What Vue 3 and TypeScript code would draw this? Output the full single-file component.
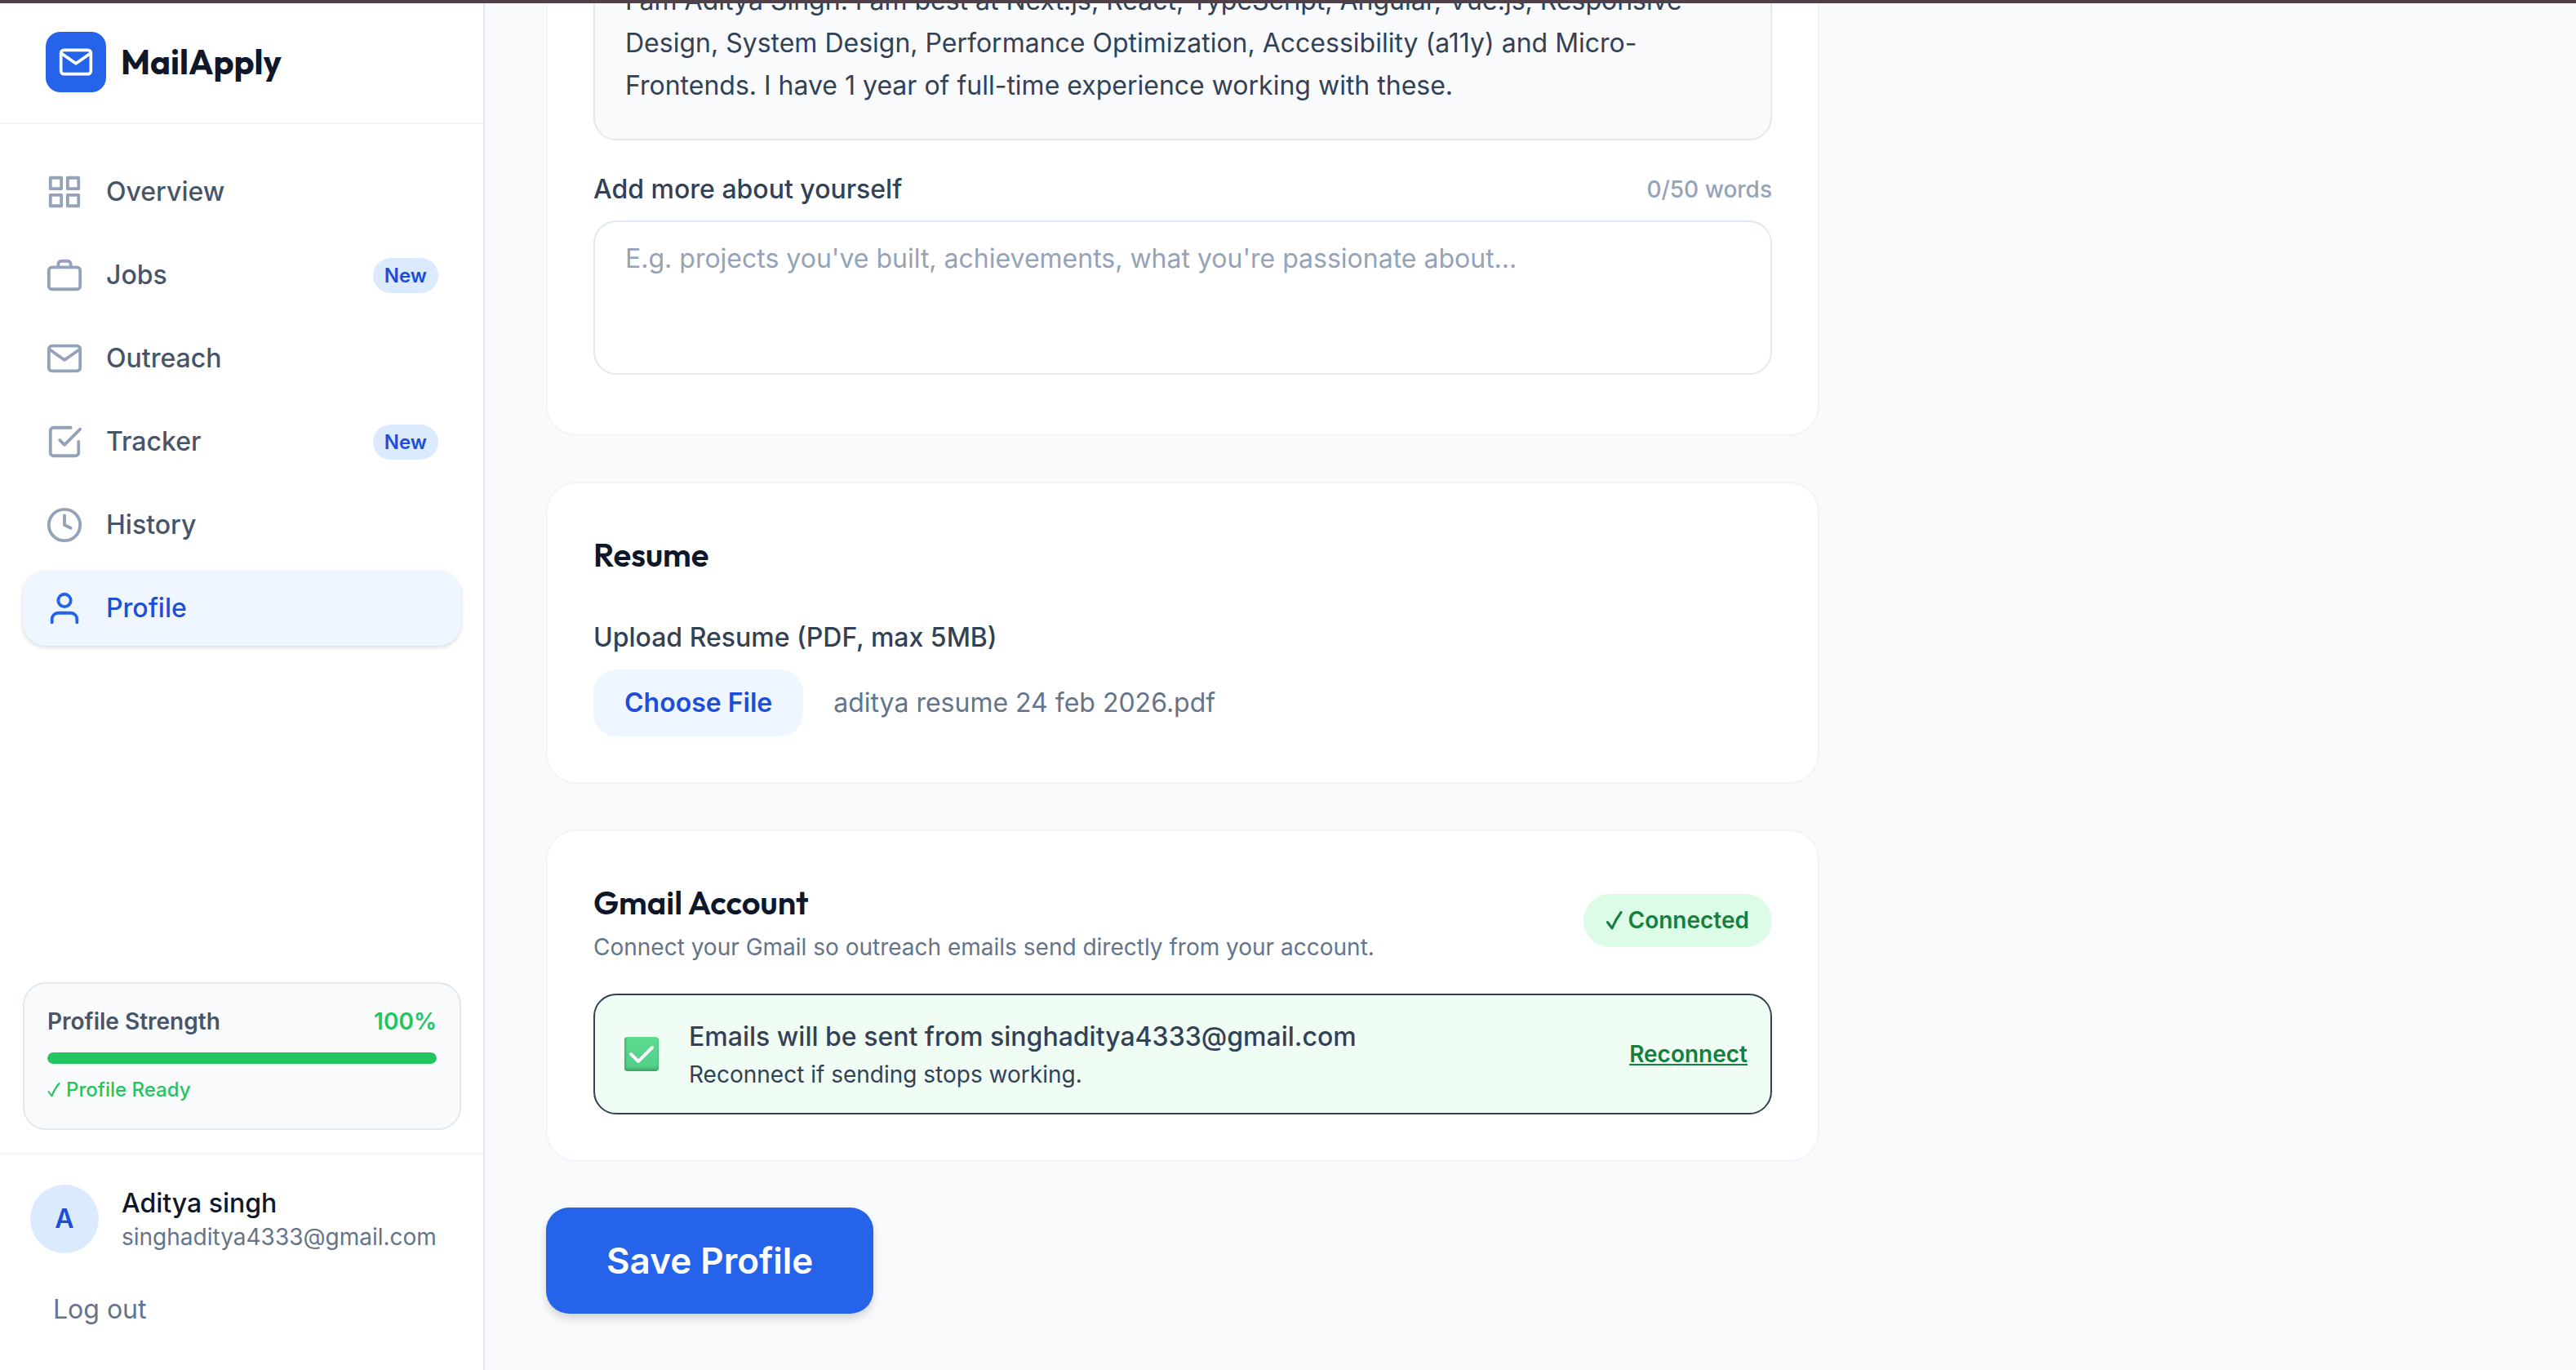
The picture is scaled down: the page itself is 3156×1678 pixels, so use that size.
<script setup lang="ts">
import { ref, computed } from 'vue'

type IconName = 'grid' | 'briefcase' | 'mail' | 'check' | 'clock' | 'user'

interface NavItem {
  label: string
  icon: IconName
  badge?: string
  active?: boolean
}

const navItems: NavItem[] = [
  { label: 'Overview', icon: 'grid' },
  { label: 'Jobs', icon: 'briefcase', badge: 'New' },
  { label: 'Outreach', icon: 'mail' },
  { label: 'Tracker', icon: 'check', badge: 'New' },
  { label: 'History', icon: 'clock' },
  { label: 'Profile', icon: 'user', active: true },
]

const strength = ref(100)
const email = 'singhaditya4333@gmail.com'
const bio =
  'I am Aditya Singh. I am best at Next.js, React, TypeScript, Angular, Vue.js, Responsive Design, System Design, Performance Optimization, Accessibility (a11y) and Micro-Frontends. I have 1 year of full-time experience working with these.'
const about = ref('')
const wordCount = computed(() => about.value.split(/\s+/).filter(Boolean).length)
</script>

<template>
  <div class="app">
    <div class="edge"></div>
    <div class="shell">
      <aside class="sidebar">
        <header class="brand">
          <span class="logo">
            <svg viewBox="0 0 24 24" class="logo-icon" aria-hidden="true">
              <rect x="2" y="4" width="20" height="16" rx="2" />
              <polyline points="22 6 12 13 2 6" />
            </svg>
          </span>
          <span class="brand-name">MailApply</span>
        </header>

        <nav class="nav">
          <a
            v-for="item in navItems"
            :key="item.label"
            href="#"
            class="nav-item"
            :class="{ active: item.active }"
          >
            <svg viewBox="0 0 24 24" class="nav-icon" aria-hidden="true">
              <template v-if="item.icon === 'grid'">
                <rect x="3" y="3" width="7" height="7" />
                <rect x="14" y="3" width="7" height="7" />
                <rect x="14" y="14" width="7" height="7" />
                <rect x="3" y="14" width="7" height="7" />
              </template>
              <template v-else-if="item.icon === 'briefcase'">
                <rect x="2" y="7" width="20" height="14" rx="2" />
                <path d="M16 7V5a2 2 0 0 0-2-2h-4a2 2 0 0 0-2 2v2" />
              </template>
              <template v-else-if="item.icon === 'mail'">
                <rect x="2" y="4" width="20" height="16" rx="2" />
                <polyline points="22 6 12 13 2 6" />
              </template>
              <template v-else-if="item.icon === 'check'">
                <polyline points="9 11 12 14 22 4" />
                <path d="M21 12v7a2 2 0 0 1-2 2H5a2 2 0 0 1-2-2V5a2 2 0 0 1 2-2h11" />
              </template>
              <template v-else-if="item.icon === 'clock'">
                <circle cx="12" cy="12" r="10" />
                <polyline points="12 6 12 12 16 14" />
              </template>
              <template v-else>
                <path d="M20 21v-2a4 4 0 0 0-4-4H8a4 4 0 0 0-4 4v2" />
                <circle cx="12" cy="7" r="4" />
              </template>
            </svg>
            <span class="nav-label">{{ item.label }}</span>
            <span v-if="item.badge" class="badge">{{ item.badge }}</span>
          </a>
        </nav>

        <section class="strength">
          <div class="strength-row">
            <span class="strength-title">Profile Strength</span>
            <span class="strength-value">{{ strength }}%</span>
          </div>
          <div class="track">
            <div class="fill" :style="{ width: strength + '%' }"></div>
          </div>
          <p class="ready">
            <svg viewBox="0 0 16 18" class="ready-check" aria-hidden="true">
              <path d="M1.500 11L5.500 16.500Q8.500 8 14.500 1" />
            </svg>
            <span>Profile Ready</span>
          </p>
        </section>

        <footer class="account">
          <div class="user">
            <span class="avatar">A</span>
            <div class="user-text">
              <span class="user-name">Aditya singh</span>
              <span class="user-email">{{ email }}</span>
            </div>
          </div>
          <button type="button" class="logout">Log out</button>
        </footer>
      </aside>

      <main class="main">
        <section class="card about-card">
          <p class="bio">{{ bio }}</p>
          <div class="field-head">
            <label for="about" class="label">Add more about yourself</label>
            <span class="count">{{ wordCount }}/50 words</span>
          </div>
          <textarea
            id="about"
            v-model="about"
            class="about"
            placeholder="E.g. projects you've built, achievements, what you're passionate about..."
          ></textarea>
        </section>

        <section class="card resume-card">
          <h2 class="title">Resume</h2>
          <span id="resume-label" class="label">Upload Resume (PDF, max 5MB)</span>
          <div class="file-row">
            <button type="button" class="choose" aria-describedby="resume-label">Choose File</button>
            <span class="file-name">aditya resume 24 feb 2026.pdf</span>
          </div>
        </section>

        <section class="card gmail-card">
          <div class="gmail-head">
            <div>
              <h2 class="title">Gmail Account</h2>
              <p class="subtitle">Connect your Gmail so outreach emails send directly from your account.</p>
            </div>
            <span class="pill">
              <svg viewBox="0 0 20 23" class="pill-check" aria-hidden="true">
                <path d="M1.500 13.500L7 21Q11.500 10 18 1.500" />
              </svg>
              <span>Connected</span>
            </span>
          </div>
          <div class="status">
            <svg viewBox="0 0 42 42" class="tick" aria-hidden="true">
              <defs>
                <linearGradient id="tick-fill" x1="0" y1="0" x2="0" y2="1">
                  <stop offset="0" stop-color="#5bdc90" />
                  <stop offset="0.86" stop-color="#53cf88" />
                  <stop offset="1" stop-color="#3f9f69" />
                </linearGradient>
                <linearGradient id="tick-edge" x1="0" y1="0" x2="1" y2="0">
                  <stop offset="0" stop-color="#2f8f5a" stop-opacity="0.6" />
                  <stop offset="0.08" stop-color="#2f8f5a" stop-opacity="0" />
                  <stop offset="0.95" stop-color="#2f8f5a" stop-opacity="0" />
                  <stop offset="1" stop-color="#2f8f5a" stop-opacity="0.3" />
                </linearGradient>
              </defs>
              <rect width="42" height="42" rx="4" fill="url(#tick-fill)" />
              <rect width="42" height="42" rx="4" fill="url(#tick-edge)" />
              <path d="M8 21L17 30L34 13" fill="none" stroke="#fbf3fb" stroke-width="4" stroke-linecap="round" stroke-linejoin="round" />
            </svg>
            <div class="status-text">
              <p class="status-main">Emails will be sent from {{ email }}</p>
              <p class="status-sub">Reconnect if sending stops working.</p>
            </div>
            <a href="#" class="reconnect">Reconnect</a>
          </div>
        </section>

        <button type="button" class="save">Save Profile</button>
      </main>
    </div>
  </div>
</template>

<style>
body {
  margin: 0;
  background: #f8fafc;
}
</style>

<style scoped>
.app {
  display: flex;
  flex-direction: column;
  height: 100vh;
  overflow: hidden;
  background: #f8fafc;
  color: #334155;
  font-family: Inter, 'Liberation Sans', sans-serif;
  font-size: 32px;
  line-height: 46px;
}
.app * {
  box-sizing: border-box;
}
p,
h2 {
  margin: 0;
}
button {
  border: 0;
  font: inherit;
  cursor: pointer;
}
.edge {
  flex: none;
  height: 4px;
  background: #50404a;
}
.shell {
  display: flex;
  flex: 1;
  min-height: 0;
}

.sidebar {
  display: flex;
  flex-direction: column;
  flex: none;
  width: 594px;
  background: #fff;
  border-right: 2px solid #e2e8f0;
}
.brand {
  display: flex;
  align-items: center;
  gap: 18px;
  padding: 35px 56px 37px;
  border-bottom: 2px solid #f1f5f9;
}
.logo {
  display: flex;
  align-items: center;
  justify-content: center;
  width: 74px;
  height: 74px;
  border-radius: 18px;
  background: #2563eb;
}
.logo-icon,
.nav-icon,
.ready-check,
.pill-check {
  flex: none;
  fill: none;
  stroke: currentColor;
  stroke-width: 2;
  stroke-linecap: round;
  stroke-linejoin: round;
}
.logo-icon {
  width: 44px;
  height: 44px;
  color: #fff;
}
.brand-name {
  font-family: Outfit, Lato, sans-serif;
  font-size: 42px;
  font-weight: 700;
  color: #0f172a;
}
.nav {
  display: flex;
  flex-direction: column;
  flex: 1;
  gap: 10px;
  padding: 37px 27px 37px 28px;
}
.nav-item {
  display: flex;
  align-items: center;
  gap: 28px;
  padding: 23px 28px;
  border-radius: 28px;
  color: #475569;
  font-weight: 500;
  text-decoration: none;
}
.nav-icon {
  width: 46px;
  height: 46px;
  color: #94a3b8;
}
.nav-label {
  flex: 1;
}
.nav-item.active {
  background: #eff6ff;
  color: #1d4ed8;
  box-shadow: 0 2px 6px rgba(0, 0, 0, 0.1), 0 2px 4px rgba(0, 0, 0, 0.06);
}
.nav-item.active .nav-icon {
  color: #2563eb;
}
.badge {
  padding: 4px 14px;
  border-radius: 22px;
  background: #dbeafe;
  color: #1d4ed8;
  font-size: 24px;
  line-height: 35px;
  font-weight: 600;
}

.strength {
  margin: 0 27px 28px 28px;
  padding: 28px 28px 30px;
  border: 2px solid #e2e8f0;
  border-radius: 28px;
  background: #f8fafc;
}
.strength-row {
  display: flex;
  justify-content: space-between;
  font-size: 28px;
  line-height: 36px;
  font-weight: 600;
}
.strength-title {
  color: #475569;
}
.strength-value {
  color: #22c55e;
}
.track {
  height: 14px;
  margin-top: 20px;
  border-radius: 7px;
  background: #e2e8f0;
  overflow: hidden;
}
.fill {
  height: 100%;
  border-radius: 7px;
  background: #22c55e;
}
.ready {
  display: flex;
  align-items: center;
  gap: 7px;
  margin-top: 14px;
  color: #22c55e;
  font-size: 24px;
  line-height: 35px;
  font-weight: 500;
}
.ready-check {
  width: 16px;
  height: 18px;
}

.account {
  padding: 37px 28px 33px;
  border-top: 2px solid #f1f5f9;
}
.user {
  display: flex;
  align-items: center;
  gap: 28px;
  padding: 0 9px;
}
.avatar {
  display: flex;
  align-items: center;
  justify-content: center;
  flex: none;
  width: 84px;
  height: 84px;
  border-radius: 50%;
  background: #dbeafe;
  color: #1d4ed8;
  font-weight: 600;
}
.user-text {
  display: flex;
  flex-direction: column;
}
.user-name {
  color: #0f172a;
  font-weight: 500;
  line-height: 44px;
}
.user-email {
  color: #64748b;
  font-size: 28px;
  line-height: 38px;
}
.logout {
  display: block;
  margin-top: 28px;
  padding: 18px 37px;
  background: none;
  color: #64748b;
}

.main {
  display: flex;
  flex-direction: column;
  flex: 1;
  align-items: flex-start;
  justify-content: flex-end;
  gap: 56px;
  min-width: 0;
  padding: 0 75px 69px;
  overflow: hidden;
}
.card {
  flex: none;
  width: 100%;
  max-width: 1560px;
  padding: 56px;
  border: 2px solid #f1f5f9;
  border-radius: 37px;
  background: #fff;
}
.about-card {
  padding-bottom: 73px;
}
.bio {
  padding: 37px 37px 39px;
  border: 2px solid #e2e8f0;
  border-radius: 28px;
  background: #f8fafc;
  line-height: 52px;
}
.field-head {
  display: flex;
  align-items: center;
  justify-content: space-between;
  margin: 37px 0 15px;
}
.label {
  display: block;
  color: #334155;
  font-weight: 500;
}
.count {
  color: #94a3b8;
  font-size: 28px;
  font-weight: 500;
}
.about {
  display: block;
  width: 100%;
  height: 189px;
  padding: 22px 37px;
  border: 2px solid #e2e8f0;
  border-radius: 28px;
  background: #fff;
  color: #334155;
  font: inherit;
  resize: none;
  outline: none;
}
.about::placeholder {
  color: #94a3b8;
  opacity: 1;
}
.title {
  color: #0f172a;
  font-family: Outfit, Lato, sans-serif;
  font-size: 40px;
  font-weight: 600;
  line-height: 62px;
}
.resume-card .title {
  margin-bottom: 48px;
}
.file-row {
  display: flex;
  align-items: center;
  gap: 37px;
  margin-top: 16px;
}
.choose {
  padding: 18px 38px;
  border-radius: 28px;
  background: #eff6ff;
  color: #1d4ed8;
  font-weight: 600;
}
.file-name {
  color: #64748b;
}
.gmail-head {
  display: flex;
  align-items: center;
  justify-content: space-between;
  margin-bottom: 37px;
}
.subtitle {
  margin-top: 4px;
  color: #64748b;
  font-size: 28px;
  line-height: 40px;
}
.pill {
  display: flex;
  align-items: center;
  gap: 7px;
  padding: 14px 28px;
  border-radius: 33px;
  background: #dcfce7;
  color: #15803d;
  font-size: 28px;
  font-weight: 600;
  line-height: 37px;
}
.pill-check {
  width: 20px;
  height: 23px;
  stroke-width: 3;
}
.status {
  display: flex;
  align-items: center;
  gap: 37px;
  padding: 28px 28px 28px 36px;
  border: 2px solid #334155;
  border-radius: 28px;
  background: #f0fdf4;
}
.tick {
  flex: none;
  width: 42px;
  height: 42px;
}
.status-text {
  flex: 1;
}
.status-main {
  font-weight: 500;
}
.status-sub {
  margin-top: 4px;
  font-size: 28px;
  line-height: 38px;
}
.reconnect {
  color: #15803d;
  font-size: 28px;
  font-weight: 600;
}
.save {
  flex: none;
  padding: 37px 74px;
  border-radius: 28px;
  background: #2563eb;
  color: #fff;
  font-size: 44px;
  font-weight: 600;
  line-height: 56px;
  box-shadow: 0 7px 12px rgba(0, 0, 0, 0.1), 0 4px 7px rgba(0, 0, 0, 0.06);
}
</style>
